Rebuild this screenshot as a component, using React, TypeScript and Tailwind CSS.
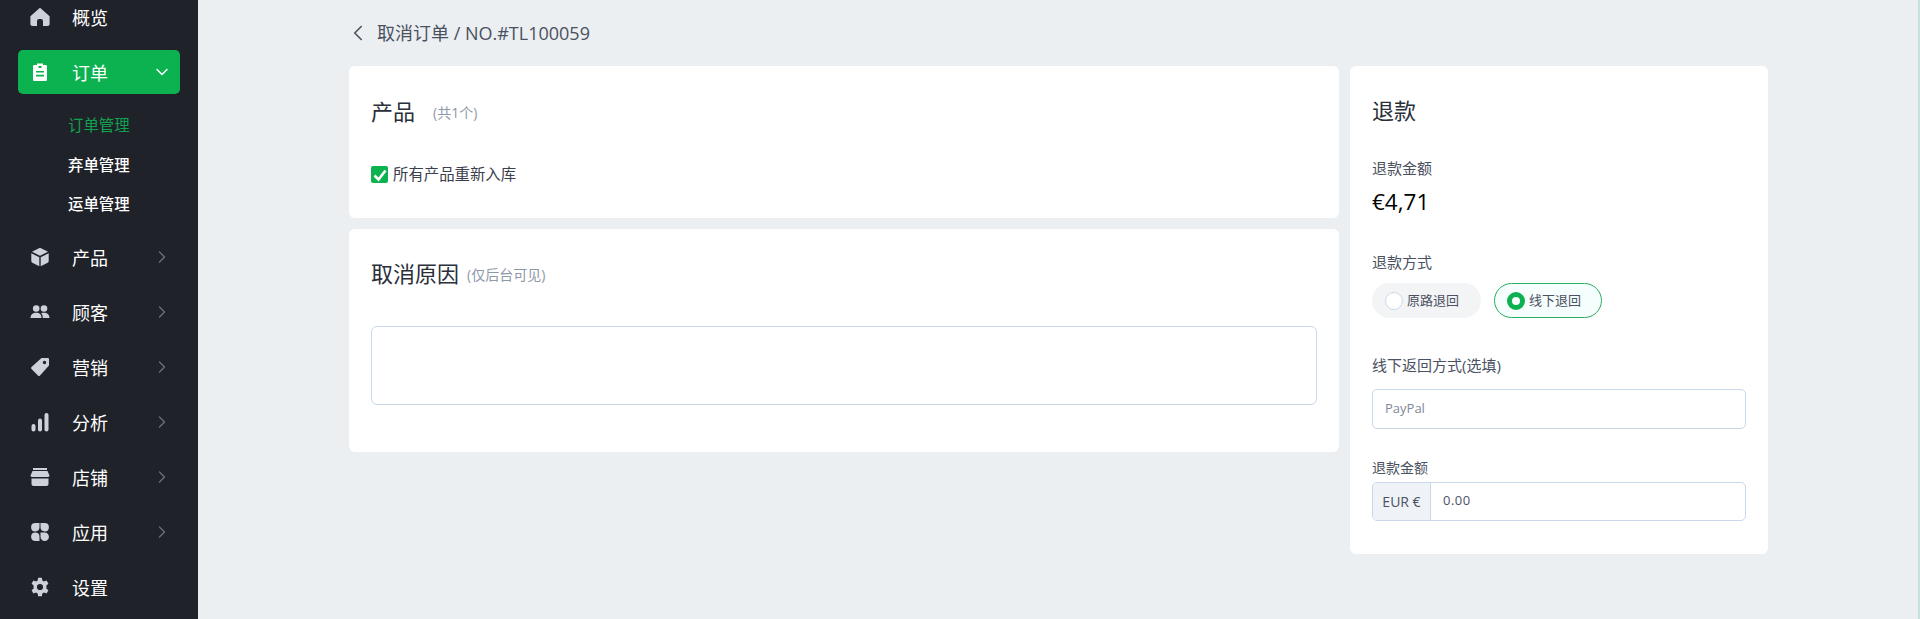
import React from "react";
import { ChevronDown, ChevronRight, ChevronLeft } from "lucide-react";

const Home = () => (<svg viewBox="0 0 20 20" className="w-5 h-5" fill="#ccd1da"><path d="M10 .8 19.6 9.2V17a2 2 0 0 1-2 2H13v-5a2 2 0 0 0-2-2H9a2 2 0 0 0-2 2v5H2.400a2 2 0 0 1-2-2V9.200Z"/></svg>);
const Clip = () => (<svg viewBox="0 0 20 20" className="w-5 h-5"><path fill="#fff" d="M7 1.500h6V3h2.700A1.300 1.300 0 0 1 17 4.300V17.700A1.300 1.300 0 0 1 15.700 19H4.300A1.300 1.300 0 0 1 3 17.700V4.300A1.300 1.300 0 0 1 4.300 3H7Z"/><path fill="#0bb24f" d="M8.500 4h3v2h-3zM6 9h8v1.600H6zM6 12.800h8v1.600H6z"/></svg>);
const Cube = () => (<svg viewBox="0 0 20 20" className="w-5 h-5" fill="#ccd1da"><path d="M10 .8 18 4.800 10 8.700 2 4.800Z"/><path d="M1.300 6.300 9.300 10.200V19.200L2.300 15.700A1.800 1.800 0 0 1 1.300 14Z"/><path d="M18.700 6.300 10.700 10.200V19.200L17.700 15.700A1.800 1.800 0 0 0 18.700 14Z"/></svg>);
const Users = () => (<svg viewBox="0 0 20 20" className="w-5 h-5" fill="#ccd1da"><circle cx="6.200" cy="6.500" r="3.300"/><circle cx="14" cy="6.500" r="3.300"/><path d="M.5 16c0-3.500 2.500-5.300 5.700-5.300s5.300 1.800 5.300 5.300Z"/><path d="M12.800 16c0-2-.5-3.700-1.700-4.800.9-.4 1.900-.5 2.900-.5 3 0 5.500 1.800 5.500 5.300Z"/></svg>);
const Tag = () => (<svg viewBox="0 0 20 20" className="w-5 h-5" fill="#ccd1da"><path fillRule="evenodd" d="M11.500 1H18a1 1 0 0 1 1 1v6.500L10 18.500a1.500 1.500 0 0 1-2.100 0L1.500 12.100a1.500 1.500 0 0 1 0-2.100ZM14.500 3.800a1.700 1.700 0 1 0 0 3.400 1.700 1.700 0 0 0 0-3.400Z"/></svg>);
const Bars = () => (<svg viewBox="0 0 20 20" className="w-5 h-5" fill="#ccd1da"><rect x="1.500" y="12" width="4" height="7.500" rx="2"/><rect x="8" y="6.500" width="4" height="13" rx="2"/><rect x="14.500" y="1" width="4" height="18.500" rx="2"/></svg>);
const Store = () => (<svg viewBox="0 0 20 20" className="w-5 h-5" fill="#ccd1da"><path d="M3 1h14v2H3zM2.500 4h15l2 4.500a1.800 1.800 0 0 1-1.800 1.500H2.300A1.800 1.800 0 0 1 .5 8.500Z"/><path d="M1.500 11.500h17V17a2 2 0 0 1-2 2h-13a2 2 0 0 1-2-2Z"/></svg>);
const Apps = () => (<svg viewBox="0 0 20 20" className="w-5 h-5" fill="#ccd1da"><path d="M5.300 1H9.500v4.300A4.200 4.200 0 1 1 5.300 1Z"/><path d="M14.700 1a4.200 4.200 0 1 1-4.200 4.300V1Z"/><path d="M5.300 19a4.200 4.200 0 1 1 4.200-4.300V19Z"/><path d="M14.700 19a4.200 4.200 0 0 1-4.200-4.300v-4.200h4.200a4.250 4.250 0 0 1 0 8.500Z"/></svg>);
const Gear = () => (<svg viewBox="0 0 24 24" className="w-5 h-5" fill="#ccd1da"><path fillRule="evenodd" d="M14.200 1h-4.400l-.6 3.200a8.500 8.500 0 0 0-2 1.200L4.100 4.300 1.900 8.100l2.500 2.100a8.500 8.500 0 0 0 0 3.600l-2.500 2.100 2.200 3.800 3.100-1.100a8.500 8.500 0 0 0 2 1.200l.6 3.200h4.400l.6-3.200a8.500 8.500 0 0 0 2-1.200l3.100 1.100 2.200-3.800-2.500-2.100a8.500 8.500 0 0 0 0-3.600l2.500-2.100-2.200-3.800-3.100 1.100a8.500 8.500 0 0 0-2-1.200ZM12 8.300a3.700 3.700 0 1 1 0 7.400 3.700 3.700 0 0 1 0-7.400Z"/></svg>);

function NavItem({ icon, label, arrow = true }: { icon: React.ReactNode; label: string; arrow?: boolean }) {
  return (
    <div className="flex items-center h-[44px] mb-[11px] pl-[30px] pr-[26px] text-white text-[18px]">
      <span className="w-[42px] flex-none flex">{icon}</span>
      <span className="flex-1 leading-[24px] pt-[1px]">{label}</span>
      {arrow && <ChevronRight size={20} strokeWidth={1.6} className="text-[#6b7078]" />}
    </div>
  );
}

export default function App() {
  return (
    <div className="flex h-[619px] overflow-hidden bg-[#ebeff2] [font-family:'Open_Sans','Noto_Sans_CJK_SC',sans-serif]">
      <aside className="w-[198px] flex-none bg-[#1f2229] overflow-hidden">
        <div className="-mt-[5px]">
          <NavItem icon={<Home />} label="概览" arrow={false} />
          <div className="flex items-center h-[44px] mx-[18px] pl-[12px] pr-[8px] rounded-[5px] bg-[#0bb24f] text-white text-[18px]">
            <span className="w-[42px] flex-none flex"><Clip /></span>
            <span className="flex-1 pt-[2px]">订单</span>
            <ChevronDown size={20} strokeWidth={1.8} className="text-white" />
          </div>
          <div className="pl-[68px] pt-[12px] pb-[10px] text-[15.4px]">
            <div className="h-[40px] leading-[40px] text-[#10a24f]">订单管理</div>
            <div className="h-[39px] leading-[39px] text-white font-medium">弃单管理</div>
            <div className="h-[40px] leading-[40px] text-white font-medium">运单管理</div>
          </div>
          <NavItem icon={<Cube />} label="产品" />
          <NavItem icon={<Users />} label="顾客" />
          <NavItem icon={<Tag />} label="营销" />
          <NavItem icon={<Bars />} label="分析" />
          <NavItem icon={<Store />} label="店铺" />
          <NavItem icon={<Apps />} label="应用" />
          <NavItem icon={<Gear />} label="设置" arrow={false} />
        </div>
      </aside>
      <main className="flex-1 min-w-0 border-r-2 border-[#c5e3dd]">
        <div className="w-[1419px] ml-[151px]">
          <div className="h-[66px] flex items-center text-[18px] text-[#4a5160]">
            <ChevronLeft size={26} strokeWidth={1.5} className="text-[#4a5160] -ml-[4px] mr-[6px]" />
            <span>取消订单 / NO.#TL100059</span>
          </div>
          <div className="flex gap-[11px] items-start">
            <div className="w-[990px] flex flex-col gap-[11px]">
              <section className="h-[152px] bg-white rounded-[6px] px-[22px] pt-[28px]">
                <div className="flex items-center h-[34px]">
                  <span className="text-[22px] text-[#2a2f3a]">产品</span>
                  <span className="ml-[18px] text-[14px] text-[#8f98a8] pt-[3px]">(共1个)</span>
                </div>
                <div className="flex items-center mt-[35px] text-[15.4px] text-[#3a404c]">
                  <span className="w-[17px] h-[17px] rounded-[2px] bg-[#0bb24f] flex items-center justify-center mr-[5px]">
                    <svg viewBox="0 0 16 16" className="w-[16px] h-[16px]" fill="none" stroke="#fff" strokeWidth="2.600"><path d="M2.500 8.500 6.500 12.500 13.500 3.500" /></svg>
                  </span>
                  所有产品重新入库
                </div>
              </section>
              <section className="h-[223px] bg-white rounded-[6px] px-[22px] pt-[27px]">
                <div className="flex items-center h-[34px]">
                  <span className="text-[22px] text-[#2a2f3a]">取消原因</span>
                  <span className="ml-[8px] text-[14px] text-[#8f98a8] pt-[3px]">(仅后台可见)</span>
                </div>
                <div className="mt-[36px] h-[79px] rounded-[6px] border border-[#c9d8ea] bg-white"></div>
              </section>
            </div>
            <section className="w-[418px] h-[488px] bg-white rounded-[6px] px-[22px] pt-[27px]">
              <div className="text-[22px] leading-[34px] text-[#2a2f3a]">退款</div>
              <div className="mt-[30px] text-[15px] leading-[22px] text-[#4a5160]">退款金额</div>
              <div className="mt-[8px] text-[22.5px] leading-[30px] text-[#000]">€4,71</div>
              <div className="mt-[34px] text-[15px] leading-[22px] text-[#4a5160]">退款方式</div>
              <div className="mt-[10px] flex gap-[13px] text-[13px] text-[#4a5160]">
                <div className="w-[109px] h-[35px] rounded-full bg-[#f3f4f6] flex items-center pl-[13px]">
                  <span className="w-[18px] h-[18px] rounded-full border border-[#c9d8ea] bg-white mr-[4px]"></span>
                  原路退回
                </div>
                <div className="w-[108px] h-[35px] rounded-full bg-[#f5fdfd] border border-[#27ae60] flex items-center pl-[12px]">
                  <span className="w-[18px] h-[18px] rounded-full border-[5px] border-[#0bb24f] bg-white mr-[4px]"></span>
                  线下退回
                </div>
              </div>
              <div className="mt-[36px] text-[15px] leading-[22px] text-[#4a5160]">线下返回方式(选填)</div>
              <div className="mt-[13px] h-[40px] rounded-[5px] border border-[#c9d8ea] flex items-center px-[12px] text-[13px] text-[#7f8a9b]">PayPal</div>
              <div className="mt-[28px] text-[14px] leading-[22px] text-[#4a5160]">退款金额</div>
              <div className="mt-[3px] h-[39px] rounded-[5px] border border-[#c9d8ea] flex items-stretch text-[14px] text-[#4a5160] overflow-hidden">
                <div className="w-[58px] bg-[#eff3f7] border-r border-[#c9d8ea] flex items-center justify-center">EUR €</div>
                <div className="flex-1 flex items-center pl-[12px] tracking-[0.5px] text-[13px] pb-[1px]">0.00</div>
              </div>
            </section>
          </div>
        </div>
      </main>
    </div>
  );
}
